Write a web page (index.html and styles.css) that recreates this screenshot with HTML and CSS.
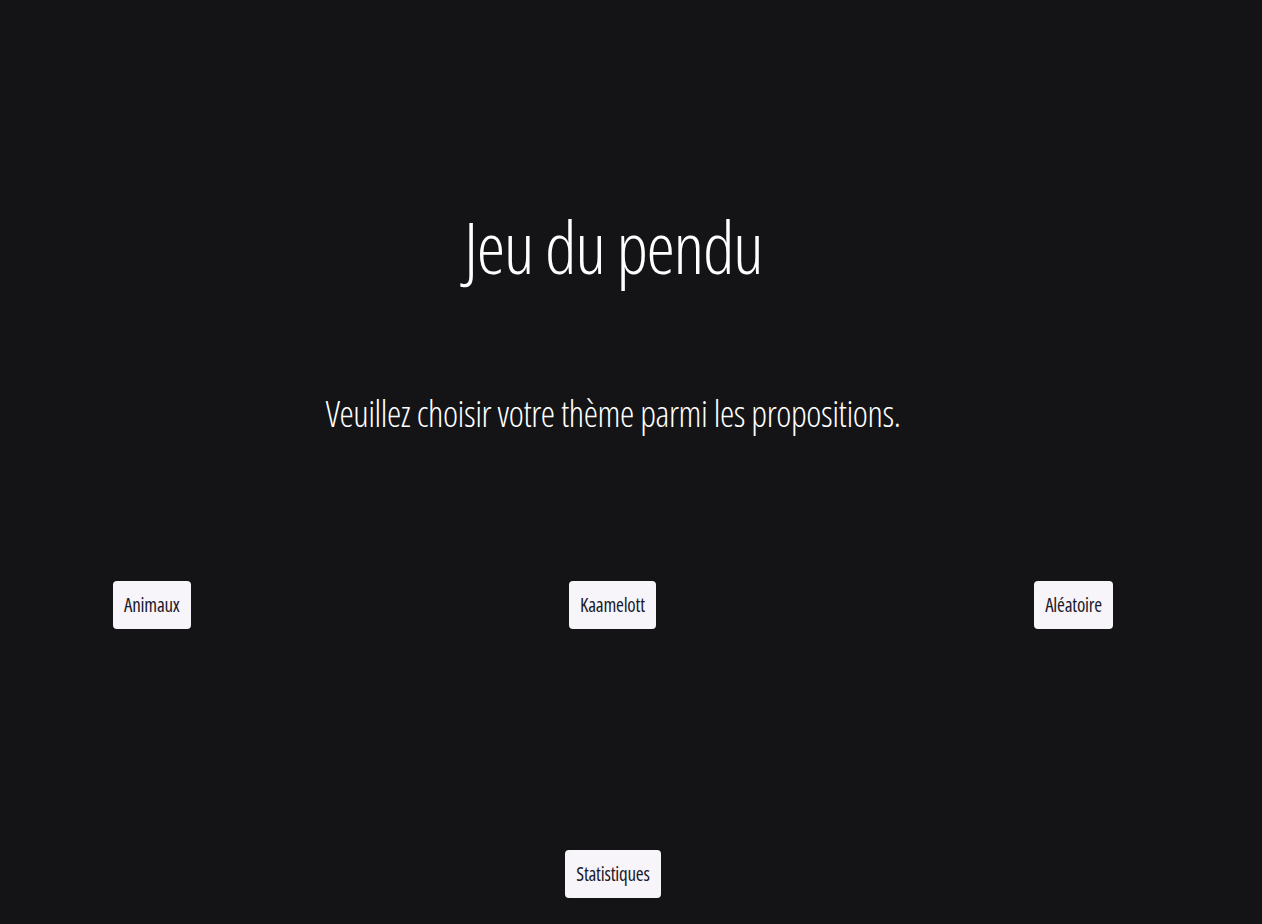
FILE: index.html
```html
<!DOCTYPE html>
<html lang="fr">
<head>
<meta charset="utf-8">
<title>Jeu du pendu</title>
<link rel="stylesheet" href="styles.css">
</head>
<body>
<div class="page">
  <h1 class="title">Jeu du pendu</h1>
  <p class="subtitle">Veuillez choisir votre thème parmi les propositions.</p>
  <div class="themes">
    <button class="btn">Animaux</button>
    <button class="btn">Kaamelott</button>
    <button class="btn">Aléatoire</button>
  </div>
  <div class="stats">
    <button class="btn">Statistiques</button>
  </div>
</div>
</body>
</html>
```

FILE: styles.css
```css
html, body {
  margin: 0;
  padding: 0;
  background: #141416;
}
body {
  font-family: "Open Sans", "Noto Sans", sans-serif;
  color: #ffffff;
}
.page {
  width: 1226px;
  display: flex;
  flex-direction: column;
  align-items: center;
  padding-top: 196px;
}
.title {
  margin: 0;
  font-size: 72px;
  font-weight: 300;
  font-stretch: 75%;
  letter-spacing: -1.4px;
  line-height: 100px;
}
.subtitle {
  margin: 92px 0 0;
  font-size: 36px;
  font-weight: 350;
  font-stretch: 75%;
  letter-spacing: -0.4px;
  line-height: 52px;
}
.themes {
  margin-top: 141px;
  width: 1000px;
  display: flex;
  justify-content: space-between;
}
.stats {
  margin-top: 221px;
  display: flex;
  justify-content: center;
}
.btn {
  font-family: "Open Sans", "Noto Sans", sans-serif;
  font-size: 19px;
  font-weight: 380;
  font-stretch: 75%;
  letter-spacing: -0.2px;
  color: #1a1a2a;
  background: #f7f5fa;
  border: none;
  border-radius: 4px;
  padding: 10px 11px;
  height: 48px;
  cursor: pointer;
}
```
